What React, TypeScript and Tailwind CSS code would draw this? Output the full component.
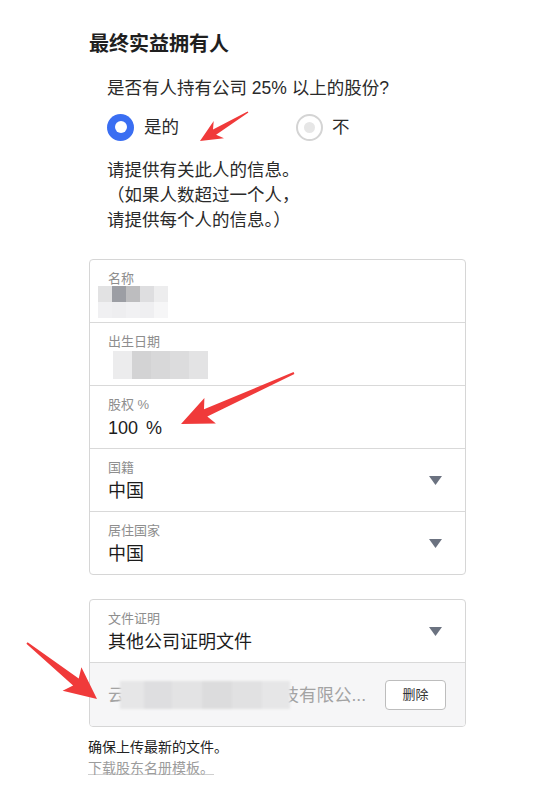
import React from "react";

const FONT = '"Liberation Sans", "Noto Sans CJK SC", sans-serif';

function arrowPoints(
  tx: number,
  ty: number,
  px: number,
  py: number,
  headLen: number,
  headW: number,
  w0: number,
  w1: number
) {
  const dx = px - tx;
  const dy = py - ty;
  const L = Math.hypot(dx, dy);
  const ux = dx / L;
  const uy = dy / L;
  const nx = -uy;
  const ny = ux;
  const bx = px - ux * headLen;
  const by = py - uy * headLen;
  const kx = bx + ux * 5;
  const ky = by + uy * 5;
  const pts: [number, number][] = [
    [tx + (nx * w0) / 2, ty + (ny * w0) / 2],
    [kx + (nx * w1) / 2, ky + (ny * w1) / 2],
    [bx + (nx * headW) / 2, by + (ny * headW) / 2],
    [px, py],
    [bx - (nx * headW) / 2, by - (ny * headW) / 2],
    [kx - (nx * w1) / 2, ky - (ny * w1) / 2],
    [tx - (nx * w0) / 2, ty - (ny * w0) / 2],
  ];
  return pts.map((p) => `${p[0].toFixed(1)},${p[1].toFixed(1)}`).join(" ");
}

function Triangle() {
  return (
    <svg width="13" height="9" viewBox="0 0 13 9" className="shrink-0">
      <path d="M0 0 H13 L6.5 9 Z" fill="#6b7280" />
    </svg>
  );
}

function Row({
  label,
  children,
  dropdown,
  first,
}: {
  label: string;
  children: React.ReactNode;
  dropdown?: boolean;
  first?: boolean;
}) {
  return (
    <div
      className={`flex h-[62px] items-center justify-between pl-[18px] pr-[23px] ${
        first ? "" : "border-t border-[#d9d9d9]"
      } box-content`}
    >
      <div className="flex h-full flex-col pt-[10px]">
        <div className="text-[13px] leading-[18px] text-[#8e8e8e]">{label}</div>
        <div className="mt-[2px] text-[18px] leading-[24px] text-[#1c1c1c]">{children}</div>
      </div>
      {dropdown && <Triangle />}
    </div>
  );
}

function NameBlur() {
  const top = ["#e2e2e3", "#9c9ea4", "#bdbdbf", "#dedee0", "#ededee"];
  const bot = ["#f0f0f2", "#eeeef0", "#f1f1f3", "#efeff1", "#f6f6f7"];
  return (
    <div className="-ml-[10px] -mt-[4px] flex flex-col blur-[0.6px]">
      <div className="flex">
        {top.map((c, i) => (
          <div key={i} className="h-[16px] w-[14px]" style={{ background: c }} />
        ))}
      </div>
      <div className="flex">
        {bot.map((c, i) => (
          <div key={i} className="h-[16px] w-[14px]" style={{ background: c }} />
        ))}
      </div>
    </div>
  );
}

function DobBlur() {
  const cols = ["#ececed", "#d3d3d4", "#d8d8d9", "#dcdcdd", "#e3e3e4"];
  return (
    <div className="ml-[5px] -mt-[2px] flex blur-[0.6px]">
      {cols.map((c, i) => (
        <div key={i} className="h-[28px] w-[19px]" style={{ background: c }} />
      ))}
    </div>
  );
}

export default function App() {
  return (
    <div
      className="relative h-[801px] w-[552px] overflow-hidden bg-white pl-[89px] pt-[30px]"
      style={{ fontFamily: FONT }}
    >
      <div className="text-[20px] font-bold leading-[28px] text-[#1f1f1f]">最终实益拥有人</div>

      <div className="mt-[17px] pl-[18px] text-[17.5px] leading-[26px] text-[#2a2a2a]">
        是否有人持有公司 25% 以上的股份?
      </div>

      <div className="mt-[12px] flex h-[28px] items-center pl-[18px] text-[17.5px] text-[#2a2a2a]">
        <div className="flex w-[189px] items-center">
          <div className="flex h-[27px] w-[27px] items-center justify-center rounded-full bg-[#3a6ef2]">
            <div className="h-[12px] w-[12px] rounded-full bg-white" />
          </div>
          <span className="ml-[10px]">是的</span>
        </div>
        <div className="flex items-center">
          <div className="flex h-[27px] w-[27px] items-center justify-center rounded-full border-2 border-[#d4d4d4] bg-white">
            <div className="h-[11px] w-[11px] rounded-full bg-[#e6e6e6]" />
          </div>
          <span className="ml-[9px]">不</span>
        </div>
      </div>

      <div className="mt-[17px] pl-[18px] text-[17.5px] leading-[25px] text-[#2a2a2a]">
        <div>请提供有关此人的信息。</div>
        <div>（如果人数超过一个人，</div>
        <div>请提供每个人的信息。）</div>
      </div>

      <div className="mt-[26px] w-[377px] rounded-[4px] border border-[#d6d6d6]">
        <Row label="名称" first>
          <NameBlur />
        </Row>
        <Row label="出生日期">
          <DobBlur />
        </Row>
        <Row label="股权 %">
          <span>100</span>
          <span className="ml-[8px]">%</span>
        </Row>
        <Row label="国籍" dropdown>
          中国
        </Row>
        <Row label="居住国家" dropdown>
          中国
        </Row>
      </div>

      <div className="mt-[24px] w-[377px] overflow-hidden rounded-[4px] border border-[#d6d6d6]">
        <Row label="文件证明" first dropdown>
          其他公司证明文件
        </Row>
        <div className="box-content flex h-[63px] items-center justify-between border-t border-[#d9d9d9] bg-[#f6f6f7] pl-[18px] pr-[19px]">
          <div className="flex items-center text-[17.5px] leading-[24px] text-[#a3a3a3]">
            <span>云</span>
            <div className="relative z-10 -ml-[6px] flex h-[28px] w-[170px] blur-[1px]">
              <div className="w-[24px] bg-[#e6e6e7]" />
              <div className="w-[28px] bg-[#dedee0]" />
              <div className="w-[30px] bg-[#e3e3e4]" />
              <div className="w-[30px] bg-[#dcdcdd]" />
              <div className="w-[30px] bg-[#e1e1e2]" />
              <div className="w-[28px] bg-[#e6e6e7]" />
            </div>
            <span className="-ml-[8px]">技有限公...</span>
          </div>
          <button className="flex h-[30px] w-[61px] items-center justify-center rounded-[4px] border border-[#bdbdbd] bg-white text-[13px] text-[#333]">
            删除
          </button>
        </div>
      </div>

      <div className="mt-[10px] -ml-[1px] text-[14px] leading-[21px]">
        <div className="text-[#222]">确保上传最新的文件。</div>
        <div className="text-[#9c9c9c] underline decoration-[#cfcfcf] underline-offset-1">下载股东名册模板。</div>
      </div>

      <svg
        className="pointer-events-none absolute left-0 top-0"
        width="552"
        height="801"
        viewBox="0 0 552 801"
      >
        <polygon points={arrowPoints(248, 112, 200, 141, 22, 20, 1.5, 6)} fill="#f03a3a" />
        <polygon points={arrowPoints(294, 373, 181, 424, 32, 28, 2, 8)} fill="#f03a3a" />
        <polygon points={arrowPoints(27, 643, 97, 699, 32, 30, 2, 9)} fill="#f03a3a" />
      </svg>
    </div>
  );
}
